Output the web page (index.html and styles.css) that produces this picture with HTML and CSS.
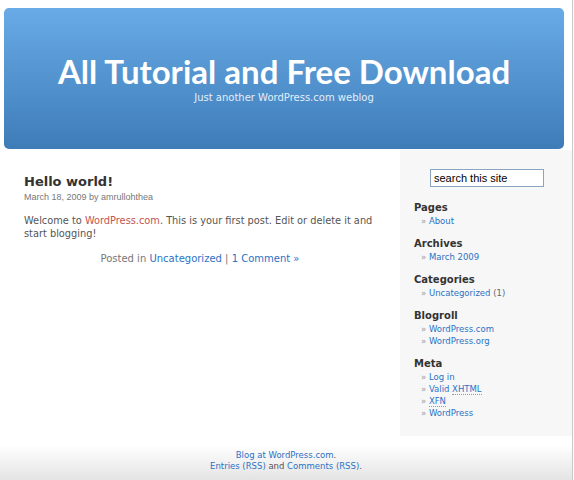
FILE: index.html
```html
<!DOCTYPE html>
<html>
<head>
<meta charset="utf-8">
<title>All Tutorial and Free Download</title>
<link rel="stylesheet" href="styles.css">
</head>
<body>
<div class="wrap">
  <header class="header">
    <h1 class="site-title">All Tutorial and Free Download</h1>
    <p class="site-desc">Just another WordPress.com weblog</p>
  </header>
  <div class="main">
    <div class="content">
      <h2 class="post-title">Hello world!</h2>
      <div class="post-meta">March 18, 2009 by amrullohthea</div>
      <p class="post-body">Welcome to <a class="red" href="#">WordPress.com</a>. This is your first post. Edit or delete it and start blogging!</p>
      <p class="post-foot">Posted in <a href="#">Uncategorized</a> | <a href="#">1 Comment »</a></p>
    </div>
    <aside class="sidebar">
      <div class="search"><input class="search-input" type="text" value="search this site"></div>
      <h3 class="wtitle">Pages</h3>
      <ul class="wlist"><li><a href="#">About</a></li></ul>
      <h3 class="wtitle">Archives</h3>
      <ul class="wlist"><li><a href="#">March 2009</a></li></ul>
      <h3 class="wtitle">Categories</h3>
      <ul class="wlist"><li><a href="#">Uncategorized</a> <span class="count">(1)</span></li></ul>
      <h3 class="wtitle">Blogroll</h3>
      <ul class="wlist"><li><a href="#">WordPress.com</a></li><li><a href="#">WordPress.org</a></li></ul>
      <h3 class="wtitle">Meta</h3>
      <ul class="wlist"><li><a href="#">Log in</a></li><li><a href="#">Valid <abbr class="abbr">XHTML</abbr></a></li><li><a href="#"><abbr class="abbr">XFN</abbr></a></li><li><a href="#">WordPress</a></li></ul>
    </aside>
  </div>
  <footer class="footer">
    <p class="foot-line"><a href="#">Blog at WordPress.com</a>.</p>
    <p class="foot-line"><a href="#">Entries (RSS)</a> and <a href="#">Comments (RSS)</a>.</p>
  </footer>
</div>
</body>
</html>
```
FILE: styles.css
```css
html, body {
  margin: 0;
  padding: 0;
  background: #fff;
  height: 100%;
}
body {
  font-family: "DejaVu Sans", Verdana, sans-serif;
  color: #555;
}
a {
  color: #2b72c6;
  text-decoration: none;
}
.wrap {
  width: 572px;
  height: 480px;
  border-right: 1px solid #c8c8c8;
  display: flex;
  flex-direction: column;
}
.header {
  margin: 8px 8px 0 4px;
  height: 141px;
  border-radius: 5px;
  background: linear-gradient(#68abe6, #3e7cb8);
  display: flex;
  flex-direction: column;
  align-items: center;
  justify-content: center;
  color: #fff;
}
.site-title {
  margin: 0;
  font-family: Lato, "Open Sans", sans-serif;
  font-weight: 700;
  font-size: 33px;
  line-height: 38px;
  color: #fff;
}
.site-desc {
  margin: 1px 0 0;
  font-size: 10px;
  line-height: 14px;
  color: #e3eefa;
}
.main {
  display: flex;
  height: 286px;
  margin-top: 1px;
}
.content {
  flex: 1;
  padding: 23px 16px 0 24px;
}
.post-title {
  margin: 0;
  font-size: 13px;
  line-height: 18px;
  font-weight: bold;
  color: #333;
}
.post-meta {
  font-family: "Liberation Sans", Arial, sans-serif;
  font-size: 9px;
  line-height: 12px;
  color: #777;
}
.post-body {
  margin: 11px 0 0;
  font-size: 9.8px;
  line-height: 13px;
  color: #555;
}
.red {
  color: #c25350;
}
.post-foot {
  margin: 12px 8px 0 0;
  text-align: center;
  font-size: 10px;
  line-height: 14px;
  color: #777;
}
.sidebar {
  width: 172px;
  background: #f7f7f7;
  padding: 19px 0 0 14px;
  box-sizing: border-box;
}
.search {
  display: flex;
  justify-content: center;
  padding-right: 14px;
  margin-bottom: 14px;
}
.search-input {
  width: 114px;
  height: 18px;
  box-sizing: border-box;
  border: 1px solid #8ba4c0;
  padding: 0 3px;
  margin: 0 0 0 2px;
  font-family: "Liberation Sans", Arial, sans-serif;
  font-size: 11px;
  color: #000;
  background: #fff;
}
.wtitle {
  margin: 0;
  font-size: 10px;
  line-height: 14px;
  font-weight: bold;
  color: #333;
}
.wlist {
  list-style: none;
  margin: 0 0 10px;
  padding: 0 0 0 7px;
}
.wlist li {
  font-size: 8.5px;
  line-height: 12px;
  color: #666;
}
.wlist li::before {
  content: "» ";
  color: #999;
}
.count {
  color: #666;
}
.abbr {
  text-decoration: none;
  border-bottom: 1px dotted #999;
}
.footer {
  flex: 1;
  background: linear-gradient(#fff 0, #fff 9px, #e4e4e4 100%);
  padding-top: 14px;
  text-align: center;
}
.foot-line {
  margin: 0;
  font-size: 8.5px;
  line-height: 11px;
  color: #555;
}
```
